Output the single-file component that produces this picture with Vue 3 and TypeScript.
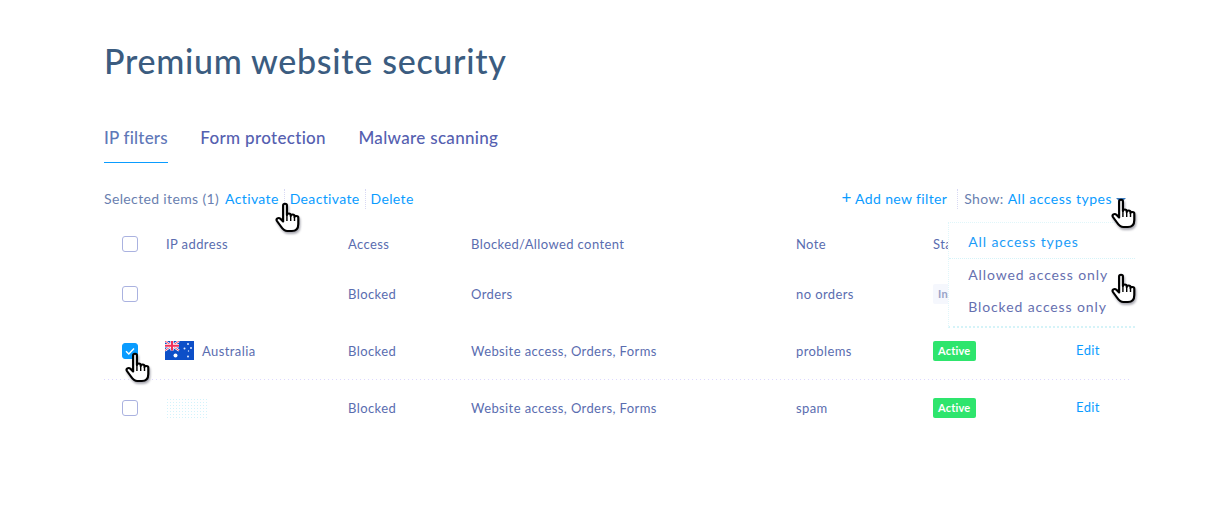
<script setup lang="ts">
interface Row {
  checked: boolean
  flag: boolean
  ip: string
  blur: boolean
  content: string
  note: string
  status: 'Active' | 'Inactive'
  editHidden: boolean
  line: boolean
}

const tabs: string[] = ['IP filters', 'Form protection', 'Malware scanning']
const menu: string[] = ['All access types', 'Allowed access only', 'Blocked access only']
const rows: Row[] = [
  { checked: false, flag: false, ip: '', blur: false, content: 'Orders', note: 'no orders', status: 'Inactive', editHidden: true, line: false },
  { checked: true, flag: true, ip: 'Australia', blur: false, content: 'Website access, Orders, Forms', note: 'problems', status: 'Active', editHidden: false, line: true },
  { checked: false, flag: false, ip: '', blur: true, content: 'Website access, Orders, Forms', note: 'spam', status: 'Active', editHidden: false, line: false }
]
const cursors: string[] = ['c1', 'c2', 'c3', 'c4']
</script>

<template>
  <div class="page">
    <h1 class="title">Premium website security</h1>

    <nav class="tabs">
      <span v-for="(t, i) in tabs" :key="t" class="tab" :class="{ on: i === 0 }">{{ t }}</span>
    </nav>

    <div class="toolbar">
      <div class="left">
        <span class="muted">Selected items (1)</span>
        <a class="link first">Activate</a>
        <a class="link sep">Deactivate</a>
        <a class="link sep">Delete</a>
      </div>
      <div class="right">
        <a class="link add"><span class="plus">+</span> Add new filter</a>
        <div class="show">
          <span class="muted">Show:</span>
          <a class="link">All access types</a>
          <i class="caret"></i>
          <ul class="menu">
            <li v-for="(m, i) in menu" :key="m" :class="{ cur: i === 0 }">{{ m }}</li>
          </ul>
        </div>
      </div>
    </div>

    <div class="table">
      <div class="grid head">
        <span class="box"></span>
        <span>IP address</span>
        <span>Access</span>
        <span>Blocked/Allowed content</span>
        <span>Note</span>
        <span>Status</span>
        <span></span>
      </div>
      <div v-for="(r, i) in rows" :key="i" class="grid row" :class="{ line: r.line }">
        <span class="box" :class="{ checked: r.checked }">
          <svg v-if="r.checked" width="12" height="10" viewBox="0 0 12 10"><path d="M2 5.2 4.8 8 10 2.4" fill="none" stroke="#fff" stroke-width="1.4" /></svg>
        </span>
        <span class="ip">
          <svg v-if="r.flag" class="flag" width="29" height="19" viewBox="0 0 29 19">
            <rect width="29" height="19" fill="#0d4fc8" />
            <path d="M0 0 14 9.5M14 0 0 9.5" stroke="#fff" stroke-width="2.2" />
            <path d="M0 0 14 9.5M14 0 0 9.5" stroke="#f0305a" stroke-width="0.9" />
            <path d="M7 0V9.5M0 4.75H14" stroke="#fff" stroke-width="3.4" />
            <path d="M7 0V9.5M0 4.75H14" stroke="#f0305a" stroke-width="2" />
            <circle cx="10.5" cy="14.5" r="2" fill="#fff" />
            <circle cx="23" cy="3" r="1" fill="#dfe9ff" />
            <circle cx="19.5" cy="7.5" r="1" fill="#dfe9ff" />
            <circle cx="26" cy="7" r="1" fill="#dfe9ff" />
            <circle cx="23.5" cy="10" r=".7" fill="#dfe9ff" />
            <circle cx="23" cy="15.5" r="1" fill="#dfe9ff" />
          </svg>
          <span v-if="r.blur" class="blur"></span>
          {{ r.ip }}
        </span>
        <span>Blocked</span>
        <span>{{ r.content }}</span>
        <span>{{ r.note }}</span>
        <span><b class="badge" :class="r.status === 'Active' ? 'active' : 'inactive'">{{ r.status }}</b></span>
        <a v-if="!r.editHidden" class="link edit">Edit</a>
      </div>
    </div>

    <svg v-for="c in cursors" :key="c" class="hand" :class="c" width="26" height="31" viewBox="0 0 24 31" preserveAspectRatio="none">
      <path d="M7.5 3.5C7.5 1 11 1 11 3.5V13C11 11 14.5 11 14.5 13V14C14.5 12 18 12 18 14V15C18 13.5 21.5 13.5 21.5 15.5V22C21.5 26 19.5 29 15.5 29H11.5C8.5 29 7 27 5.5 24.5L1.8 19C.5 16.8 3.2 15 5 16.8L7.5 19.5Z" fill="#fff" stroke="#000" stroke-width="2" stroke-linejoin="round" />
      <path d="M11 13V19M14.5 14V19M18 15V19" fill="none" stroke="#000" stroke-width="1.3" />
    </svg>
  </div>
</template>

<style scoped>
.page {
  position: relative;
  width: 1229px;
  height: 509px;
  overflow: hidden;
  box-sizing: border-box;
  padding: 40px 0 0 104px;
  background: #fff;
  font-family: Lato, "Open Sans", sans-serif;
  font-size: 14px;
  letter-spacing: 0.36px;
  color: #5a6db0;
}
.title {
  margin: 0;
  font-size: 34px;
  line-height: 42px;
  font-weight: 500;
  letter-spacing: 0.7px;
  color: #3b5c80;
}
.tabs {
  display: flex;
  gap: 32.5px;
  margin-top: 44px;
}
.tab {
  padding-bottom: 12px;
  font-size: 17px;
  line-height: 24px;
  font-weight: 500;
  letter-spacing: 0.32px;
  color: #5560b0;
  border-bottom: 1px solid transparent;
}
.tab.on {
  letter-spacing: 0.2px;
  color: #5f78b8;
  border-bottom-color: #0a9cff;
}
.toolbar {
  display: flex;
  justify-content: space-between;
  align-items: center;
  width: 1026px;
  height: 20px;
  margin-top: 26px;
  line-height: 20px;
}
.left,
.right,
.show {
  display: flex;
  align-items: center;
}
.muted {
  color: #6a7fb0;
}
.link {
  color: #0a9cff;
}
.first {
  margin-left: 6px;
}
.sep {
  margin-left: 5px;
  padding-left: 5px;
  border-left: 1px dotted #d8d9f4;
}
.plus {
  font-size: 17px;
  line-height: 14px;
}
.add {
  margin-right: 10px;
}
.show {
  position: relative;
  gap: 4px;
  margin-right: 4px;
  padding-left: 6px;
  border-left: 1px dotted #d8d9f4;
}
.show .link {
  letter-spacing: 0.5px;
}
.caret {
  width: 0;
  height: 0;
  margin-top: 2px;
  border-left: 5px solid transparent;
  border-right: 5px solid transparent;
  border-top: 5px solid #3b7cc0;
}
.menu {
  position: absolute;
  z-index: 2;
  top: 33px;
  left: -10px;
  width: 187px;
  height: 106px;
  box-sizing: border-box;
  margin: 0;
  padding: 0;
  list-style: none;
  background: #fff;
  border-top: 1px dotted #e0f6fa;
  border-left: 1px dotted #e0f6fa;
  border-bottom: 2px dotted #d5f3f8;
}
.menu li {
  height: 32px;
  padding-left: 19px;
  line-height: 32px;
  color: #6670b0;
  letter-spacing: 0.88px;
}
.menu li.cur {
  height: 35px;
  line-height: 38px;
  color: #1a9cf8;
  border-bottom: 1px dotted #d5f3f8;
}
.table {
  width: 1026px;
  margin-top: 13px;
  font-size: 13px;
  letter-spacing: 0.4px;
}
.grid {
  display: grid;
  grid-template-columns: 62px 182px 123px 325px 137px 143px 54px;
  align-items: center;
  box-sizing: border-box;
  height: 57px;
  padding-bottom: 1px;
}
.head {
  height: 44px;
  padding-bottom: 0;
}
.box {
  display: flex;
  align-items: center;
  justify-content: center;
  box-sizing: border-box;
  width: 16px;
  height: 16px;
  margin-left: 18px;
  border: 1px solid #aab2e0;
  border-radius: 3px;
}
.box.checked {
  background: #0a9cff;
  border-color: #0a9cff;
}
.row.line {
  background: repeating-linear-gradient(90deg, #dcd8ff 0 1px, transparent 1px 4px) bottom / 100% 1px no-repeat;
}
.ip {
  display: flex;
  align-items: center;
  gap: 8px;
}
.flag {
  margin: -2px 0 0 -1px;
}
.blur {
  width: 42px;
  height: 20px;
  background: radial-gradient(circle, #d3f3fb 1px, transparent 1px) 0 0 / 3px 3px;
}
.badge {
  display: inline-block;
  padding: 0 4px 0 5px;
  height: 20px;
  line-height: 20px;
  border-radius: 2px;
  font-size: 11px;
  font-weight: 700;
  letter-spacing: 0.2px;
}
.active {
  width: 34px;
  background: #2ee56d;
  color: #fff;
}
.inactive {
  background: #f5f7fd;
  color: #98a2c8;
}
.edit {
  margin-top: -2px;
}
.hand {
  position: absolute;
  z-index: 3;
  filter: drop-shadow(1px 2px 1px rgba(60, 60, 80, 0.45));
}
.c1 { left: 275px; top: 202px; }
.c2 { left: 1111px; top: 198px; }
.c3 { left: 1111px; top: 273px; }
.c4 { left: 125px; top: 352px; }
</style>

<style>
html, body { margin: 0; background: #fff; }
</style>
